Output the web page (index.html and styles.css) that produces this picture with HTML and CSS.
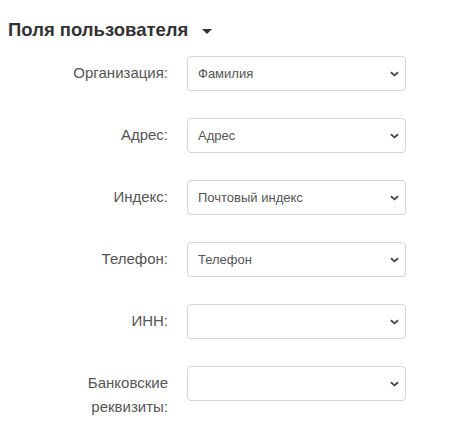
FILE: index.html
```html
<!DOCTYPE html>
<html lang="ru">
<head>
<meta charset="utf-8">
<link rel="stylesheet" href="styles.css">
</head>
<body>
<div class="panel">
  <h3 class="title">Поля пользователя <span class="caret"></span></h3>
  <div class="form">
    <div class="row">
      <label class="label">Организация:</label>
      <div class="select"><span class="value">Фамилия</span><svg class="chev" viewBox="0 0 10 6" width="9" height="6"><path d="M1 1 L5 4.5 L9 1" fill="none" stroke="#444" stroke-width="2"/></svg></div>
    </div>
    <div class="row">
      <label class="label">Адрес:</label>
      <div class="select"><span class="value">Адрес</span><svg class="chev" viewBox="0 0 10 6" width="9" height="6"><path d="M1 1 L5 4.5 L9 1" fill="none" stroke="#444" stroke-width="2"/></svg></div>
    </div>
    <div class="row">
      <label class="label">Индекс:</label>
      <div class="select"><span class="value">Почтовый индекс</span><svg class="chev" viewBox="0 0 10 6" width="9" height="6"><path d="M1 1 L5 4.5 L9 1" fill="none" stroke="#444" stroke-width="2"/></svg></div>
    </div>
    <div class="row">
      <label class="label">Телефон:</label>
      <div class="select"><span class="value">Телефон</span><svg class="chev" viewBox="0 0 10 6" width="9" height="6"><path d="M1 1 L5 4.5 L9 1" fill="none" stroke="#444" stroke-width="2"/></svg></div>
    </div>
    <div class="row">
      <label class="label">ИНН:</label>
      <div class="select"><span class="value"></span><svg class="chev" viewBox="0 0 10 6" width="9" height="6"><path d="M1 1 L5 4.5 L9 1" fill="none" stroke="#444" stroke-width="2"/></svg></div>
    </div>
    <div class="row">
      <label class="label">Банковские<br>реквизиты:</label>
      <div class="select"><span class="value"></span><svg class="chev" viewBox="0 0 10 6" width="9" height="6"><path d="M1 1 L5 4.5 L9 1" fill="none" stroke="#444" stroke-width="2"/></svg></div>
    </div>
  </div>
</div>
</body>
</html>
```
FILE: styles.css
```css
body {
  margin: 0;
  background: #fff;
  font-family: "Liberation Sans", Arial, sans-serif;
  color: #333;
}
.panel {
  padding: 0 8px;
}
.title {
  margin: 0;
  padding-top: 19px;
  font-size: 18.5px;
  line-height: 22px;
  font-weight: bold;
  color: #333;
  display: flex;
  align-items: center;
}
.caret {
  display: inline-block;
  width: 0;
  height: 0;
  margin-left: 14px;
  margin-top: 2px;
  border-left: 5px solid transparent;
  border-right: 5px solid transparent;
  border-top: 5px solid #333;
}
.form {
  margin-top: 15px;
  display: flex;
  flex-direction: column;
  gap: 27px;
}
.row {
  display: flex;
  align-items: flex-start;
}
.label {
  width: 160px;
  text-align: right;
  font-size: 15px;
  line-height: 24px;
  padding-top: 5px;
  color: #555;
}
.select {
  margin-left: 19px;
  width: 219px;
  height: 35px;
  box-sizing: border-box;
  border: 1px solid #d5d5d5;
  border-radius: 4px;
  display: flex;
  align-items: center;
  justify-content: space-between;
  padding: 0 6px 0 10px;
}
.value {
  font-size: 13px;
  color: #555;
}
.chev {
  display: block;
}
```
